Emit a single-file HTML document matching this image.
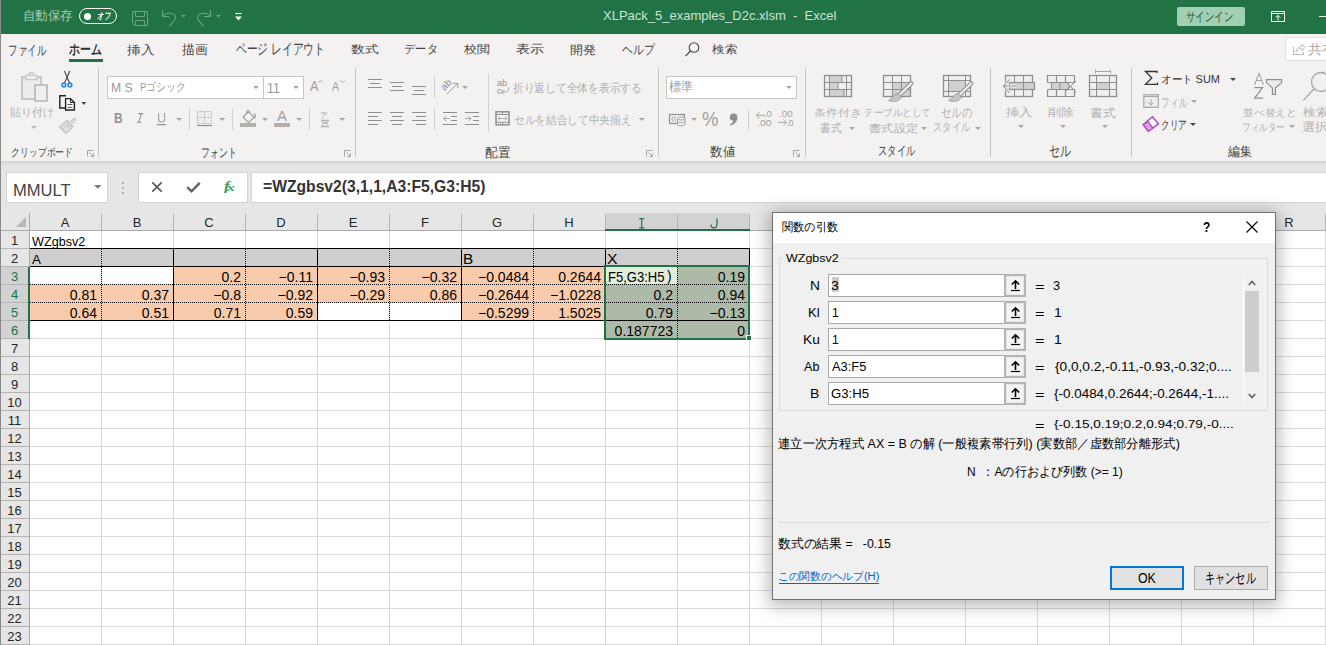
<!DOCTYPE html><html><head><meta charset="utf-8"><style>
*{box-sizing:border-box}
html,body{margin:0;padding:0}
body{width:1326px;height:645px;overflow:hidden;position:relative;background:#fff;font-family:"Liberation Sans",sans-serif;font-size:12px;color:#262626}
.a{position:absolute}
.tx{position:absolute;white-space:pre;transform-origin:0 0}
.ch{position:absolute;top:213px;height:17px;width:72px;text-align:center;font-size:13px;line-height:19px;color:#262626}
.rh{position:absolute;left:0;width:29px;height:18px;text-align:center;font-size:13px;line-height:19px;color:#262626}
.cell{position:absolute;height:17px;font-size:14px;line-height:20px;color:#000;white-space:nowrap;overflow:hidden;padding:0 4px 0 2px}
.r{text-align:right}
svg{position:absolute;overflow:visible}
</style></head><body>
<div class="a" style="left:0px;top:0px;width:1326px;height:34px;background:#217346;"></div>
<div class="a" style="left:79px;top:8px;width:38px;height:16px;border:1.5px solid #fff;border-radius:8px"></div>
<div class="a" style="left:84px;top:13px;width:7px;height:7px;border-radius:50%;background:#fff"></div>
<svg style="left:131px;top:10px;" width="18" height="17" viewBox="0 0 18 17"><path d="M1.5 1.5H16.5V15.5H3.5L1.5 13.5Z M4.5 1.5V6.5H13.5V1.5 M4.5 15.5V10.5H13.5V15.5" fill="none" stroke="#6aa583" stroke-width="1"/></svg>
<svg style="left:160px;top:9px;" width="30" height="18" viewBox="0 0 30 18"><path d="M2.5 1V7.5H9 M2.5 7.5 C6 3 15 3 15.5 8.5 C15.5 11 13 13.5 9.5 17" fill="none" stroke="#6aa583" stroke-width="1.1"/><path d="M21 6H26L23.5 8.5Z" fill="#6aa583"/></svg>
<svg style="left:196px;top:9px;" width="30" height="18" viewBox="0 0 30 18"><path d="M14.5 1V7.5H8 M14.5 7.5 C11 3 2 3 1.5 8.5 C1.5 11 4 13.5 7.5 17" fill="none" stroke="#6aa583" stroke-width="1.1"/><path d="M20 6H25L22.5 8.5Z" fill="#6aa583"/></svg>
<svg style="left:235px;top:13px;" width="7" height="8" viewBox="0 0 7 8"><path d="M0.5 0.5H6.5" stroke="#fff" stroke-width="1.2"/><path d="M0 3.5H7L3.5 7.5Z" fill="#fff"/></svg>
<div class="a" style="left:1177px;top:7px;width:68px;height:19px;background:#a0cfb4;border-radius:2px"></div>
<svg style="left:1271px;top:11px;" width="14" height="11" viewBox="0 0 14 11"><path d="M0.5 0.5H13.5V10.5H0.5Z M0.5 2.5H13.5 M7 9.5V4.5 M4.8 6.5L7 4.3L9.2 6.5" fill="none" stroke="#fff" stroke-width="1"/></svg>
<div class="a" style="left:1319px;top:16px;width:7px;height:1px;background:#e6efe9;"></div>
<div class="a" style="left:0px;top:34px;width:1326px;height:127px;background:#f3f2f1;"></div>
<div class="a" style="left:69px;top:59px;width:34px;height:3px;background:#217346;"></div>
<svg style="left:685px;top:42px;" width="15" height="15" viewBox="0 0 15 15"><circle cx="9" cy="5.5" r="4.8" fill="none" stroke="#444" stroke-width="1.1"/><path d="M5.6 9L0.5 14.2" stroke="#444" stroke-width="1.2"/></svg>
<div class="a" style="left:1285px;top:37px;width:60px;height:24px;background:#fff;border:1px solid #e1dfdd;border-radius:2px"></div>
<svg style="left:1293px;top:43px;" width="12" height="12" viewBox="0 0 12 12"><path d="M0.5 4V11.5H10.5V9" fill="none" stroke="#b8b8b8" stroke-width="1"/><path d="M3 9C3 5 6 3.5 9 3.5V1L11.8 4.5L9 8V5.5C6.5 5.5 4.5 6.5 3 9Z" fill="none" stroke="#b8b8b8" stroke-width="0.9"/></svg>
<div class="a" style="left:98px;top:68px;width:1px;height:89px;background:#c8c6c4;"></div>
<div class="a" style="left:355px;top:68px;width:1px;height:89px;background:#c8c6c4;"></div>
<div class="a" style="left:658px;top:68px;width:1px;height:89px;background:#c8c6c4;"></div>
<div class="a" style="left:805px;top:68px;width:1px;height:89px;background:#c8c6c4;"></div>
<div class="a" style="left:990px;top:68px;width:1px;height:89px;background:#c8c6c4;"></div>
<div class="a" style="left:1131px;top:68px;width:1px;height:89px;background:#c8c6c4;"></div>
<svg style="left:87px;top:150px;" width="7" height="7" viewBox="0 0 7 7"><path d="M0.5 6.5V0.5H6.5" fill="none" stroke="#a6a6a6" stroke-width="1"/><path d="M2.5 2.5L6.5 6.5 M6.5 3.5V6.5H3.5" fill="none" stroke="#a6a6a6" stroke-width="1"/></svg>
<svg style="left:344px;top:150px;" width="7" height="7" viewBox="0 0 7 7"><path d="M0.5 6.5V0.5H6.5" fill="none" stroke="#a6a6a6" stroke-width="1"/><path d="M2.5 2.5L6.5 6.5 M6.5 3.5V6.5H3.5" fill="none" stroke="#a6a6a6" stroke-width="1"/></svg>
<svg style="left:646px;top:150px;" width="7" height="7" viewBox="0 0 7 7"><path d="M0.5 6.5V0.5H6.5" fill="none" stroke="#a6a6a6" stroke-width="1"/><path d="M2.5 2.5L6.5 6.5 M6.5 3.5V6.5H3.5" fill="none" stroke="#a6a6a6" stroke-width="1"/></svg>
<svg style="left:793px;top:150px;" width="7" height="7" viewBox="0 0 7 7"><path d="M0.5 6.5V0.5H6.5" fill="none" stroke="#a6a6a6" stroke-width="1"/><path d="M2.5 2.5L6.5 6.5 M6.5 3.5V6.5H3.5" fill="none" stroke="#a6a6a6" stroke-width="1"/></svg>
<svg style="left:0;top:0" width="1326" height="645" viewBox="0 0 1326 645"><path d="M22 77H41V99H22Z" fill="#ececec" stroke="#c8c8c8" stroke-width="2"/><path d="M26 75.5H37V79.5H26Z" fill="#f3f3f3" stroke="#c8c8c8" stroke-width="1.5"/><path d="M29 75.5C29 71.5 34 71.5 34 75.5" fill="none" stroke="#c8c8c8" stroke-width="1.5"/><path d="M35 85H47V101H35Z" fill="#efefef" stroke="#b4b4b4" stroke-width="1.6"/></svg>
<svg style="left:31px;top:126px;" width="6" height="3" viewBox="0 0 6 3"><path d="M0 0H6L3 3Z" fill="#b8b8b8"/></svg>
<svg style="left:0;top:0" width="1326" height="645" viewBox="0 0 1326 645"><path d="M64.5 71L69.5 83 M69.8 71L64.5 83" stroke="#444" stroke-width="1.1" fill="none"/><circle cx="63.9" cy="85" r="1.9" fill="none" stroke="#2b88d8" stroke-width="1.6"/><circle cx="69.9" cy="85" r="1.9" fill="none" stroke="#2b88d8" stroke-width="1.6"/></svg>
<svg style="left:0;top:0" width="1326" height="645" viewBox="0 0 1326 645"><path d="M66 95.8H59.8V108H65" fill="none" stroke="#222" stroke-width="1.4"/><path d="M65.6 98.6H70.5L74.4 102.5V110H65.6Z" fill="#fff" stroke="#222" stroke-width="1.4"/><path d="M70.5 98.6V102.5H74.4" fill="none" stroke="#222" stroke-width="1"/><path d="M67.5 104.5H72.5 M67.5 107.3H72.5" stroke="#444" stroke-width="0.9"/></svg>
<svg style="left:0;top:0" width="1326" height="645" viewBox="0 0 1326 645"><path d="M81.4 102H86.2L83.8 105Z" fill="#444"/></svg>
<svg style="left:0;top:0" width="1326" height="645" viewBox="0 0 1326 645"><path d="M59.6 127L67 120.5L73 126.5L66 133.5Z" fill="#dedede" stroke="#c0c0c0" stroke-width="1.2"/><path d="M62 129.5L69.5 123" stroke="#c8c8c8"/><path d="M68.5 125L74.5 119.5" stroke="#c0c0c0" stroke-width="3.2" stroke-linecap="round"/><path d="M68.5 125L74.5 119.5" stroke="#e6e6e6" stroke-width="1.2" stroke-linecap="round"/></svg>
<div class="a" style="left:107px;top:76px;width:157px;height:23px;background:#fff;border:1px solid #c6c6c6"></div>
<div class="a" style="left:263px;top:76px;width:41px;height:23px;background:#fff;border:1px solid #c6c6c6"></div>
<svg style="left:253px;top:86px;" width="6" height="3" viewBox="0 0 6 3"><path d="M0 0H6L3 3Z" fill="#a6a6a6"/></svg>
<svg style="left:293px;top:86px;" width="6" height="3" viewBox="0 0 6 3"><path d="M0 0H6L3 3Z" fill="#a6a6a6"/></svg>
<svg style="left:0;top:0" width="1326" height="645" viewBox="0 0 1326 645"><path d="M318.3 82.8L320.5 80.3L322.7 82.8" fill="none" stroke="#b4b4b4" stroke-width="1"/></svg>
<svg style="left:0;top:0" width="1326" height="645" viewBox="0 0 1326 645"><path d="M340.2 80.2L342.5 82.7L344.8 80.2" fill="none" stroke="#b4b4b4" stroke-width="1"/></svg>
<svg style="left:0;top:0" width="1326" height="645" viewBox="0 0 1326 645"><path d="M138.5 113.6H143.2 M137 122.2H141.4 M141.3 113.6L138.9 122.2" fill="none" stroke="#909090" stroke-width="1.1"/></svg>
<svg style="left:0;top:0" width="1326" height="645" viewBox="0 0 1326 645"><path d="M158.6 113V119C158.6 123 164.6 123 164.6 119V113" fill="none" stroke="#a0a0a0" stroke-width="1.1"/><path d="M157 124.6H166" stroke="#909090" stroke-width="1.2"/></svg>
<svg style="left:176px;top:118px;" width="6" height="3" viewBox="0 0 6 3"><path d="M0 0H6L3 3Z" fill="#a6a6a6"/></svg>
<div class="a" style="left:189px;top:109px;width:1px;height:21px;background:#d2d0ce;"></div>
<svg style="left:0;top:0" width="1326" height="645" viewBox="0 0 1326 645"><rect x="197.5" y="111.5" width="14" height="12" fill="#ededed" stroke="#b8b8b8" stroke-dasharray="1.5 1"/><path d="M204.5 112V123 M198 117.5H211" stroke="#b8b8b8" stroke-dasharray="1.5 1"/><path d="M197 125.5H212" stroke="#8f8f8f" stroke-width="1.2"/></svg>
<svg style="left:219px;top:118px;" width="6" height="3" viewBox="0 0 6 3"><path d="M0 0H6L3 3Z" fill="#a6a6a6"/></svg>
<div class="a" style="left:232px;top:109px;width:1px;height:21px;background:#d2d0ce;"></div>
<svg style="left:0;top:0" width="1326" height="645" viewBox="0 0 1326 645"><path d="M243 117L248.5 111.7L254 117.3L248.5 122.6Z" fill="#f2f2f2" stroke="#a0a0a0" stroke-width="1.2"/><path d="M246.5 114C246 111 248 110 249.5 111.3" fill="none" stroke="#a0a0a0" stroke-width="1.1"/><path d="M254 113.5C255.5 115 255.5 117 254.5 118.5" fill="none" stroke="#a0a0a0" stroke-width="1.3"/></svg>
<div class="a" style="left:240px;top:123px;width:16px;height:4px;background:#b4b0ac;"></div>
<svg style="left:262px;top:118px;" width="6" height="3" viewBox="0 0 6 3"><path d="M0 0H6L3 3Z" fill="#a6a6a6"/></svg>
<div class="a" style="left:274px;top:123px;width:16px;height:4px;background:#b4b0ac;"></div>
<svg style="left:296px;top:118px;" width="6" height="3" viewBox="0 0 6 3"><path d="M0 0H6L3 3Z" fill="#a6a6a6"/></svg>
<div class="a" style="left:309px;top:109px;width:1px;height:21px;background:#d2d0ce;"></div>
<svg style="left:0;top:0" width="1326" height="645" viewBox="0 0 1326 645"><path d="M321 120.5H329 M322 123H328 M321 126.5H329" stroke="#b0b0b0" stroke-width="1.3"/><path d="M322.5 120.5V126.5 M327.5 120.5V126.5" stroke="#c8c8c8"/></svg>
<svg style="left:339px;top:118px;" width="6" height="3" viewBox="0 0 6 3"><path d="M0 0H6L3 3Z" fill="#a6a6a6"/></svg>
<div class="a" style="left:368px;top:79px;width:14px;height:1px;background:#8f8f8f;"></div>
<div class="a" style="left:370px;top:83px;width:10px;height:1px;background:#8f8f8f;"></div>
<div class="a" style="left:368px;top:87px;width:14px;height:1px;background:#8f8f8f;"></div>
<div class="a" style="left:390px;top:82px;width:14px;height:1px;background:#8f8f8f;"></div>
<div class="a" style="left:392px;top:86px;width:10px;height:1px;background:#8f8f8f;"></div>
<div class="a" style="left:390px;top:90px;width:14px;height:1px;background:#8f8f8f;"></div>
<div class="a" style="left:412px;top:86px;width:14px;height:1px;background:#8f8f8f;"></div>
<div class="a" style="left:414px;top:90px;width:10px;height:1px;background:#8f8f8f;"></div>
<div class="a" style="left:412px;top:94px;width:14px;height:1px;background:#8f8f8f;"></div>
<div class="a" style="left:434px;top:77px;width:1px;height:21px;background:#d2d0ce;"></div>
<svg style="left:0;top:0" width="1326" height="645" viewBox="0 0 1326 645"><text x="0" y="0" font-size="10" fill="#909090" font-family="Liberation Sans" transform="translate(444.5 91) rotate(-45)">ab</text><path d="M447 94L457.5 83.5 M453 83.3H457.7V88" fill="none" stroke="#a0a0a0" stroke-width="1"/></svg>
<svg style="left:462px;top:86px;" width="6" height="3" viewBox="0 0 6 3"><path d="M0 0H6L3 3Z" fill="#a6a6a6"/></svg>
<div class="a" style="left:488px;top:74px;width:1px;height:58px;background:#d2d0ce;"></div>
<svg style="left:0;top:0" width="1326" height="645" viewBox="0 0 1326 645"><text x="497" y="86" font-size="9" fill="#909090" font-family="Liberation Sans">ab</text><text x="497" y="94" font-size="9" fill="#909090" font-family="Liberation Sans">c</text><path d="M508.3 87.3C509.5 90 507.5 92 504 92H501.5 M504 89.5L501.5 92L504 94.5" fill="none" stroke="#a0a0a0" stroke-width="1"/></svg>
<div class="a" style="left:368px;top:112px;width:14px;height:1px;background:#8f8f8f;"></div>
<div class="a" style="left:368px;top:116px;width:10px;height:1px;background:#8f8f8f;"></div>
<div class="a" style="left:368px;top:120px;width:14px;height:1px;background:#8f8f8f;"></div>
<div class="a" style="left:368px;top:124px;width:10px;height:1px;background:#8f8f8f;"></div>
<div class="a" style="left:390px;top:112px;width:14px;height:1px;background:#8f8f8f;"></div>
<div class="a" style="left:392px;top:116px;width:10px;height:1px;background:#8f8f8f;"></div>
<div class="a" style="left:390px;top:120px;width:14px;height:1px;background:#8f8f8f;"></div>
<div class="a" style="left:392px;top:124px;width:10px;height:1px;background:#8f8f8f;"></div>
<div class="a" style="left:412px;top:112px;width:14px;height:1px;background:#8f8f8f;"></div>
<div class="a" style="left:416px;top:116px;width:10px;height:1px;background:#8f8f8f;"></div>
<div class="a" style="left:412px;top:120px;width:14px;height:1px;background:#8f8f8f;"></div>
<div class="a" style="left:416px;top:124px;width:10px;height:1px;background:#8f8f8f;"></div>
<div class="a" style="left:434px;top:109px;width:1px;height:21px;background:#d2d0ce;"></div>
<div class="a" style="left:443px;top:112px;width:14px;height:1px;background:#8f8f8f;"></div>
<div class="a" style="left:451px;top:116px;width:6px;height:1px;background:#8f8f8f;"></div>
<div class="a" style="left:451px;top:120px;width:6px;height:1px;background:#8f8f8f;"></div>
<div class="a" style="left:443px;top:124px;width:14px;height:1px;background:#8f8f8f;"></div>
<svg style="left:0;top:0" width="1326" height="645" viewBox="0 0 1326 645"><path d="M449.5 118.5H443.5 M446 116L443.5 118.5L446 121" fill="none" stroke="#a6a6a6" stroke-width="1"/></svg>
<div class="a" style="left:465px;top:112px;width:14px;height:1px;background:#8f8f8f;"></div>
<div class="a" style="left:473px;top:116px;width:6px;height:1px;background:#8f8f8f;"></div>
<div class="a" style="left:473px;top:120px;width:6px;height:1px;background:#8f8f8f;"></div>
<div class="a" style="left:465px;top:124px;width:14px;height:1px;background:#8f8f8f;"></div>
<svg style="left:0;top:0" width="1326" height="645" viewBox="0 0 1326 645"><path d="M465 118.5H471 M468.5 116L471 118.5L468.5 121" fill="none" stroke="#a6a6a6" stroke-width="1"/></svg>
<svg style="left:0;top:0" width="1326" height="645" viewBox="0 0 1326 645"><rect x="496" y="111.8" width="13" height="13" fill="none" stroke="#8f8f8f" stroke-width="1.5"/><path d="M496 114.5H509 M496 122.3H509 M502.5 112V114.5 M502.5 122.3V124.8" stroke="#8f8f8f" stroke-width="1"/><path d="M498 118.5H507 M500 116.8L498 118.5L500 120.2 M505 116.8L507 118.5L505 120.2" fill="none" stroke="#a6a6a6" stroke-width="0.9"/></svg>
<svg style="left:639px;top:118px;" width="6" height="3" viewBox="0 0 6 3"><path d="M0 0H6L3 3Z" fill="#a6a6a6"/></svg>
<div class="a" style="left:666px;top:76px;width:131px;height:23px;background:#fff;border:1px solid #c6c6c6"></div>
<svg style="left:786px;top:86px;" width="6" height="3" viewBox="0 0 6 3"><path d="M0 0H6L3 3Z" fill="#a6a6a6"/></svg>
<svg style="left:0;top:0" width="1326" height="645" viewBox="0 0 1326 645"><rect x="669.5" y="114.5" width="15" height="9" fill="none" stroke="#8f8f8f" stroke-width="1.2"/><path d="M673.5 116.5C671.5 116.5 671.5 121.5 673.5 121.5 M675.5 116.5C674.5 117 674.5 121 675.5 121.5" fill="none" stroke="#8f8f8f" stroke-width="0.9"/><path d="M677.5 118.5V124.5C677.5 126.3 685 126.3 685 124.5V118.5" fill="#ededed" stroke="#a6a6a6" stroke-width="1"/><ellipse cx="681.25" cy="118.5" rx="3.75" ry="1.5" fill="#ededed" stroke="#a6a6a6" stroke-width="1"/><path d="M677.5 121.5C677.5 123 685 123 685 121.5" fill="none" stroke="#a6a6a6" stroke-width="0.8"/></svg>
<svg style="left:691px;top:118px;" width="6" height="3" viewBox="0 0 6 3"><path d="M0 0H6L3 3Z" fill="#a6a6a6"/></svg>
<svg style="left:0;top:0" width="1326" height="645" viewBox="0 0 1326 645"><path d="M733.5 113.5C737 113.5 738 116 737.3 119C736.5 122.5 733.5 125 730 125.5L729.8 124.5C731.8 123.5 733.2 122 733.2 120.5C731 120.5 729.8 119.3 729.8 117.2C729.8 115 731.3 113.5 733.5 113.5Z" fill="#8f8f8f"/></svg>
<div class="a" style="left:748px;top:109px;width:1px;height:21px;background:#d2d0ce;"></div>
<svg style="left:0;top:0" width="1326" height="645" viewBox="0 0 1326 645"><path d="M765 115.3H756.5 M759.5 112.3L756.5 115.3L759.5 118.3" fill="none" stroke="#a6a6a6" stroke-width="1"/></svg>
<svg style="left:0;top:0" width="1326" height="645" viewBox="0 0 1326 645"><path d="M778 122.4H786.5 M783.5 119.4L786.5 122.4L783.5 125.4" fill="none" stroke="#a6a6a6" stroke-width="1"/></svg>
<svg style="left:0;top:0" width="1326" height="645" viewBox="0 0 1326 645"><rect x="824.5" y="75.5" width="27.0" height="21.0" fill="#efefef"/><rect x="830" y="76" width="12" height="6" fill="#d0d0d0"/><rect x="830" y="83" width="8" height="6" fill="#d0d0d0"/><rect x="830" y="90" width="14" height="6" fill="#d0d0d0"/><path d="M829.5 75.5V96.5" stroke="#8f8f8f" stroke-width="1"/><path d="M846.5 75.5V96.5" stroke="#8f8f8f" stroke-width="1"/><path d="M824.5 82.5H851.5" stroke="#8f8f8f" stroke-width="1"/><path d="M824.5 89.5H851.5" stroke="#8f8f8f" stroke-width="1"/><rect x="824.5" y="75.5" width="27.0" height="21.0" fill="none" stroke="#8f8f8f" stroke-width="1.3"/><path d="M842 76V82 M838 83V89 M844 90V96" stroke="#8f8f8f"/></svg>
<svg style="left:0;top:0" width="1326" height="645" viewBox="0 0 1326 645"><rect x="883.5" y="75.5" width="27.0" height="21.0" fill="#efefef"/><rect x="893" y="83" width="17" height="13" fill="#d0d0d0"/><path d="M892.5 75.5V96.5" stroke="#8f8f8f" stroke-width="1"/><path d="M901.5 75.5V96.5" stroke="#8f8f8f" stroke-width="1"/><path d="M883.5 82.5H910.5" stroke="#8f8f8f" stroke-width="1"/><path d="M883.5 89.5H910.5" stroke="#8f8f8f" stroke-width="1"/><rect x="883.5" y="75.5" width="27.0" height="21.0" fill="none" stroke="#8f8f8f" stroke-width="1.3"/><path d="M911.3 83.3L899.5 95" stroke="#8f8f8f" stroke-width="4.4" stroke-linecap="round"/><path d="M911.3 83.3L899.5 95" stroke="#f0f0f0" stroke-width="2.2" stroke-linecap="round"/><path d="M897.5 93.5C893.5 94 893 98.5 888.5 100.5C894 102.5 900 101 901.5 97Z" fill="#c4c4c4" stroke="#9a9a9a" stroke-width="0.9"/></svg>
<svg style="left:0;top:0" width="1326" height="645" viewBox="0 0 1326 645"><rect x="943.5" y="75.5" width="27.0" height="21.0" fill="#efefef"/><rect x="949" y="81" width="16" height="10" fill="#d0d0d0"/><path d="M948.5 75.5V96.5" stroke="#8f8f8f" stroke-width="1"/><path d="M965.5 75.5V96.5" stroke="#8f8f8f" stroke-width="1"/><path d="M943.5 80.5H970.5" stroke="#8f8f8f" stroke-width="1"/><path d="M943.5 91.5H970.5" stroke="#8f8f8f" stroke-width="1"/><rect x="943.5" y="75.5" width="27.0" height="21.0" fill="none" stroke="#8f8f8f" stroke-width="1.3"/><path d="M971.3 83.3L959.5 95" stroke="#8f8f8f" stroke-width="4.4" stroke-linecap="round"/><path d="M971.3 83.3L959.5 95" stroke="#f0f0f0" stroke-width="2.2" stroke-linecap="round"/><path d="M957.5 93.5C953.5 94 953 98.5 948.5 100.5C954 102.5 960 101 961.5 97Z" fill="#c4c4c4" stroke="#9a9a9a" stroke-width="0.9"/></svg>
<svg style="left:849px;top:127px;" width="6" height="3" viewBox="0 0 6 3"><path d="M0 0H6L3 3Z" fill="#a6a6a6"/></svg>
<svg style="left:921px;top:127px;" width="6" height="3" viewBox="0 0 6 3"><path d="M0 0H6L3 3Z" fill="#a6a6a6"/></svg>
<svg style="left:975px;top:127px;" width="6" height="3" viewBox="0 0 6 3"><path d="M0 0H6L3 3Z" fill="#a6a6a6"/></svg>
<svg style="left:0;top:0" width="1326" height="645" viewBox="0 0 1326 645"><rect x="1005.5" y="75.5" width="27.0" height="21.0" fill="#efefef"/><path d="M1014.5 75.5V96.5" stroke="#8f8f8f" stroke-width="1"/><path d="M1023.5 75.5V96.5" stroke="#8f8f8f" stroke-width="1"/><path d="M1005.5 82.5H1032.5" stroke="#8f8f8f" stroke-width="1"/><path d="M1005.5 89.5H1032.5" stroke="#8f8f8f" stroke-width="1"/><rect x="1005.5" y="75.5" width="27.0" height="21.0" fill="none" stroke="#8f8f8f" stroke-width="1.3"/><rect x="1009.5" y="82.5" width="25" height="7" fill="#d0d0d0" stroke="#8f8f8f" stroke-width="1.2"/><path d="M1023.5 82.5V89.5" stroke="#8f8f8f"/><path d="M1016 86H1004 M1009.5 79.5L1003.5 86L1009.5 92.5" fill="none" stroke="#f3f3f3" stroke-width="3"/><path d="M1016 86H1004 M1009.5 79.5L1003.5 86L1009.5 92.5" fill="none" stroke="#8f8f8f" stroke-width="1.1"/></svg>
<svg style="left:1018px;top:125px;" width="6" height="3" viewBox="0 0 6 3"><path d="M0 0H6L3 3Z" fill="#a6a6a6"/></svg>
<svg style="left:0;top:0" width="1326" height="645" viewBox="0 0 1326 645"><rect x="1047.5" y="75.5" width="27" height="21" fill="#efefef"/><path d="M1047.5 82.5V75.5H1074.5V82.5H1047.5 M1047.5 89.5V96.5H1074.5V89.5H1047.5 M1056.5 75.5V82.5 M1065.5 75.5V82.5 M1056.5 89.5V96.5 M1065.5 89.5V96.5" fill="none" stroke="#8f8f8f" stroke-width="1.2"/><path d="M1051.5 82.5H1067L1070 86L1067 89.5H1051.5Z" fill="#d0d0d0" stroke="#8f8f8f" stroke-width="1.1"/><path d="M1060 82.5V89.5" stroke="#8f8f8f"/><path d="M1065 81L1076 92 M1076 81L1065 92" stroke="#8f8f8f" stroke-width="1"/></svg>
<svg style="left:1060px;top:125px;" width="6" height="3" viewBox="0 0 6 3"><path d="M0 0H6L3 3Z" fill="#a6a6a6"/></svg>
<svg style="left:0;top:0" width="1326" height="645" viewBox="0 0 1326 645"><rect x="1089.5" y="75.5" width="27.0" height="21.0" fill="#efefef"/><rect x="1097" y="83" width="12" height="6" fill="#d0d0d0"/><path d="M1096.5 75.5V96.5" stroke="#8f8f8f" stroke-width="1"/><path d="M1109.5 75.5V96.5" stroke="#8f8f8f" stroke-width="1"/><path d="M1089.5 82.5H1116.5" stroke="#8f8f8f" stroke-width="1"/><path d="M1089.5 89.5H1116.5" stroke="#8f8f8f" stroke-width="1"/><rect x="1089.5" y="75.5" width="27.0" height="21.0" fill="none" stroke="#8f8f8f" stroke-width="1.3"/><path d="M1095.5 71.5H1110.5 M1095.5 69.5V73.5 M1110.5 69.5V73.5" stroke="#a6a6a6" stroke-width="1"/></svg>
<svg style="left:1102px;top:125px;" width="6" height="3" viewBox="0 0 6 3"><path d="M0 0H6L3 3Z" fill="#a6a6a6"/></svg>
<svg style="left:0;top:0" width="1326" height="645" viewBox="0 0 1326 645"><path d="M1157 73V71.5H1145.5L1151.8 78L1145.5 84.3H1157.5V82.5" fill="none" stroke="#333" stroke-width="1.3"/></svg>
<svg style="left:1230px;top:77.5px;" width="6" height="3" viewBox="0 0 6 3"><path d="M0 0H6L3 3Z" fill="#444"/></svg>
<svg style="left:0;top:0" width="1326" height="645" viewBox="0 0 1326 645"><rect x="1143.8" y="94.8" width="14.5" height="12.5" fill="#ededed" stroke="#a6a6a6" stroke-width="1.2"/><path d="M1144 96.5H1158" stroke="#a6a6a6"/><path d="M1151 99.5V105 M1148.5 102.5L1151 105L1153.5 102.5" fill="none" stroke="#a6a6a6" stroke-width="1"/></svg>
<svg style="left:1191px;top:100px;" width="6" height="3" viewBox="0 0 6 3"><path d="M0 0H6L3 3Z" fill="#a6a6a6"/></svg>
<svg style="left:0;top:0" width="1326" height="645" viewBox="0 0 1326 645"><path d="M1152.5 116.8L1158.4 123.8L1148.2 131.2L1143.4 124.6Z" fill="#fff" stroke="#b146c2" stroke-width="1.5"/><path d="M1143.4 124.6L1148 121.4L1153 128.4L1148.2 131.2Z" fill="#d7a0e0" stroke="#b146c2" stroke-width="1.2"/></svg>
<svg style="left:1190px;top:122.5px;" width="6" height="3" viewBox="0 0 6 3"><path d="M0 0H6L3 3Z" fill="#444"/></svg>
<svg style="left:0;top:0" width="1326" height="645" viewBox="0 0 1326 645"><path d="M1254.5 84.8L1259 73.3L1263.5 84.8 M1256.3 80.5H1261.7" fill="none" stroke="#a6a6a6" stroke-width="1.1"/><path d="M1254.3 87.6H1262.6L1254.6 98.2H1263" fill="none" stroke="#8f8f8f" stroke-width="1.2"/></svg>
<svg style="left:0;top:0" width="1326" height="645" viewBox="0 0 1326 645"><path d="M1266.5 79.6H1281.6V82.6L1275.4 87.9V94.4H1272.4V87.9L1266.5 82.6Z" fill="#ededed" stroke="#8f8f8f" stroke-width="1.2"/></svg>
<svg style="left:1289px;top:125px;" width="6" height="3" viewBox="0 0 6 3"><path d="M0 0H6L3 3Z" fill="#a6a6a6"/></svg>
<svg style="left:0;top:0" width="1326" height="645" viewBox="0 0 1326 645"><circle cx="1321" cy="82" r="9.5" fill="#f0f0f0" stroke="#a6a6a6" stroke-width="1.3"/><path d="M1314 89L1303.3 100.4" stroke="#a6a6a6" stroke-width="1.3"/></svg>
<div class="a" style="left:0px;top:161px;width:1326px;height:52px;background:#e6e6e6;"></div>
<div class="a" style="left:0px;top:161px;width:1326px;height:5px;background:linear-gradient(#d0d0d0,#e6e6e6);"></div>
<div class="a" style="left:6px;top:172px;width:102px;height:31px;background:#fff;border:1px solid #d4d4d4"></div>
<svg style="left:94px;top:185px;" width="8" height="4" viewBox="0 0 8 4"><path d="M0 0H7.5L3.75 3.8Z" fill="#777"/></svg>
<div class="a" style="left:122px;top:182px;width:2px;height:2px;background:#b0b0b0;"></div>
<div class="a" style="left:122px;top:187px;width:2px;height:2px;background:#b0b0b0;"></div>
<div class="a" style="left:122px;top:192px;width:2px;height:2px;background:#b0b0b0;"></div>
<div class="a" style="left:138px;top:172px;width:110px;height:31px;background:#fff;border:1px solid #d4d4d4"></div>
<svg style="left:151px;top:181px;" width="12" height="12" viewBox="0 0 12 12"><path d="M1.3 1.3L10.7 10.7 M10.7 1.3L1.3 10.7" stroke="#5a5a5a" stroke-width="1.7"/></svg>
<svg style="left:186px;top:181px;" width="15" height="12" viewBox="0 0 15 12"><path d="M1.2 6.2L5.5 10.3L13.8 1.8" fill="none" stroke="#626262" stroke-width="2.4"/></svg>
<div class="a" style="left:251px;top:172px;width:1080px;height:31px;background:#fff;border:1px solid #d4d4d4"></div>
<div class="a" style="left:0px;top:213px;width:1326px;height:18px;background:#e6e6e6;"></div>
<div class="a" style="left:0px;top:231px;width:29px;height:414px;background:#e6e6e6;"></div>
<div class="a" style="left:606px;top:213px;width:143px;height:17px;background:#d2d2d2;"></div>
<div class="a" style="left:0px;top:267px;width:29px;height:72px;background:#d2d2d2;"></div>
<div class="a" style="left:30px;top:230px;width:1296px;height:1px;background:#dadada;"></div>
<div class="a" style="left:30px;top:248px;width:1296px;height:1px;background:#dadada;"></div>
<div class="a" style="left:0px;top:248px;width:29px;height:1px;background:#b4b4b4;"></div>
<div class="a" style="left:30px;top:266px;width:1296px;height:1px;background:#dadada;"></div>
<div class="a" style="left:0px;top:266px;width:29px;height:1px;background:#b4b4b4;"></div>
<div class="a" style="left:30px;top:284px;width:1296px;height:1px;background:#dadada;"></div>
<div class="a" style="left:0px;top:284px;width:29px;height:1px;background:#b4b4b4;"></div>
<div class="a" style="left:30px;top:302px;width:1296px;height:1px;background:#dadada;"></div>
<div class="a" style="left:0px;top:302px;width:29px;height:1px;background:#b4b4b4;"></div>
<div class="a" style="left:30px;top:320px;width:1296px;height:1px;background:#dadada;"></div>
<div class="a" style="left:0px;top:320px;width:29px;height:1px;background:#b4b4b4;"></div>
<div class="a" style="left:30px;top:338px;width:1296px;height:1px;background:#dadada;"></div>
<div class="a" style="left:0px;top:338px;width:29px;height:1px;background:#b4b4b4;"></div>
<div class="a" style="left:30px;top:356px;width:1296px;height:1px;background:#dadada;"></div>
<div class="a" style="left:0px;top:356px;width:29px;height:1px;background:#b4b4b4;"></div>
<div class="a" style="left:30px;top:374px;width:1296px;height:1px;background:#dadada;"></div>
<div class="a" style="left:0px;top:374px;width:29px;height:1px;background:#b4b4b4;"></div>
<div class="a" style="left:30px;top:392px;width:1296px;height:1px;background:#dadada;"></div>
<div class="a" style="left:0px;top:392px;width:29px;height:1px;background:#b4b4b4;"></div>
<div class="a" style="left:30px;top:410px;width:1296px;height:1px;background:#dadada;"></div>
<div class="a" style="left:0px;top:410px;width:29px;height:1px;background:#b4b4b4;"></div>
<div class="a" style="left:30px;top:428px;width:1296px;height:1px;background:#dadada;"></div>
<div class="a" style="left:0px;top:428px;width:29px;height:1px;background:#b4b4b4;"></div>
<div class="a" style="left:30px;top:446px;width:1296px;height:1px;background:#dadada;"></div>
<div class="a" style="left:0px;top:446px;width:29px;height:1px;background:#b4b4b4;"></div>
<div class="a" style="left:30px;top:464px;width:1296px;height:1px;background:#dadada;"></div>
<div class="a" style="left:0px;top:464px;width:29px;height:1px;background:#b4b4b4;"></div>
<div class="a" style="left:30px;top:482px;width:1296px;height:1px;background:#dadada;"></div>
<div class="a" style="left:0px;top:482px;width:29px;height:1px;background:#b4b4b4;"></div>
<div class="a" style="left:30px;top:500px;width:1296px;height:1px;background:#dadada;"></div>
<div class="a" style="left:0px;top:500px;width:29px;height:1px;background:#b4b4b4;"></div>
<div class="a" style="left:30px;top:518px;width:1296px;height:1px;background:#dadada;"></div>
<div class="a" style="left:0px;top:518px;width:29px;height:1px;background:#b4b4b4;"></div>
<div class="a" style="left:30px;top:536px;width:1296px;height:1px;background:#dadada;"></div>
<div class="a" style="left:0px;top:536px;width:29px;height:1px;background:#b4b4b4;"></div>
<div class="a" style="left:30px;top:554px;width:1296px;height:1px;background:#dadada;"></div>
<div class="a" style="left:0px;top:554px;width:29px;height:1px;background:#b4b4b4;"></div>
<div class="a" style="left:30px;top:572px;width:1296px;height:1px;background:#dadada;"></div>
<div class="a" style="left:0px;top:572px;width:29px;height:1px;background:#b4b4b4;"></div>
<div class="a" style="left:30px;top:590px;width:1296px;height:1px;background:#dadada;"></div>
<div class="a" style="left:0px;top:590px;width:29px;height:1px;background:#b4b4b4;"></div>
<div class="a" style="left:30px;top:608px;width:1296px;height:1px;background:#dadada;"></div>
<div class="a" style="left:0px;top:608px;width:29px;height:1px;background:#b4b4b4;"></div>
<div class="a" style="left:30px;top:626px;width:1296px;height:1px;background:#dadada;"></div>
<div class="a" style="left:0px;top:626px;width:29px;height:1px;background:#b4b4b4;"></div>
<div class="a" style="left:30px;top:644px;width:1296px;height:1px;background:#dadada;"></div>
<div class="a" style="left:0px;top:644px;width:29px;height:1px;background:#b4b4b4;"></div>
<div class="a" style="left:30px;top:662px;width:1296px;height:1px;background:#dadada;"></div>
<div class="a" style="left:0px;top:662px;width:29px;height:1px;background:#b4b4b4;"></div>
<div class="a" style="left:0px;top:230px;width:1326px;height:1px;background:#ababab;"></div>
<div class="a" style="left:29px;top:231px;width:1px;height:414px;background:#dadada;"></div>
<div class="a" style="left:29px;top:214px;width:1px;height:16px;background:#b4b4b4;"></div>
<div class="a" style="left:101px;top:231px;width:1px;height:414px;background:#dadada;"></div>
<div class="a" style="left:101px;top:214px;width:1px;height:16px;background:#b4b4b4;"></div>
<div class="a" style="left:173px;top:231px;width:1px;height:414px;background:#dadada;"></div>
<div class="a" style="left:173px;top:214px;width:1px;height:16px;background:#b4b4b4;"></div>
<div class="a" style="left:245px;top:231px;width:1px;height:414px;background:#dadada;"></div>
<div class="a" style="left:245px;top:214px;width:1px;height:16px;background:#b4b4b4;"></div>
<div class="a" style="left:317px;top:231px;width:1px;height:414px;background:#dadada;"></div>
<div class="a" style="left:317px;top:214px;width:1px;height:16px;background:#b4b4b4;"></div>
<div class="a" style="left:389px;top:231px;width:1px;height:414px;background:#dadada;"></div>
<div class="a" style="left:389px;top:214px;width:1px;height:16px;background:#b4b4b4;"></div>
<div class="a" style="left:461px;top:231px;width:1px;height:414px;background:#dadada;"></div>
<div class="a" style="left:461px;top:214px;width:1px;height:16px;background:#b4b4b4;"></div>
<div class="a" style="left:533px;top:231px;width:1px;height:414px;background:#dadada;"></div>
<div class="a" style="left:533px;top:214px;width:1px;height:16px;background:#b4b4b4;"></div>
<div class="a" style="left:605px;top:231px;width:1px;height:414px;background:#dadada;"></div>
<div class="a" style="left:605px;top:214px;width:1px;height:16px;background:#b4b4b4;"></div>
<div class="a" style="left:677px;top:231px;width:1px;height:414px;background:#dadada;"></div>
<div class="a" style="left:677px;top:214px;width:1px;height:16px;background:#b4b4b4;"></div>
<div class="a" style="left:749px;top:231px;width:1px;height:414px;background:#dadada;"></div>
<div class="a" style="left:749px;top:214px;width:1px;height:16px;background:#b4b4b4;"></div>
<div class="a" style="left:821px;top:231px;width:1px;height:414px;background:#dadada;"></div>
<div class="a" style="left:821px;top:214px;width:1px;height:16px;background:#b4b4b4;"></div>
<div class="a" style="left:893px;top:231px;width:1px;height:414px;background:#dadada;"></div>
<div class="a" style="left:893px;top:214px;width:1px;height:16px;background:#b4b4b4;"></div>
<div class="a" style="left:965px;top:231px;width:1px;height:414px;background:#dadada;"></div>
<div class="a" style="left:965px;top:214px;width:1px;height:16px;background:#b4b4b4;"></div>
<div class="a" style="left:1037px;top:231px;width:1px;height:414px;background:#dadada;"></div>
<div class="a" style="left:1037px;top:214px;width:1px;height:16px;background:#b4b4b4;"></div>
<div class="a" style="left:1109px;top:231px;width:1px;height:414px;background:#dadada;"></div>
<div class="a" style="left:1109px;top:214px;width:1px;height:16px;background:#b4b4b4;"></div>
<div class="a" style="left:1181px;top:231px;width:1px;height:414px;background:#dadada;"></div>
<div class="a" style="left:1181px;top:214px;width:1px;height:16px;background:#b4b4b4;"></div>
<div class="a" style="left:1253px;top:231px;width:1px;height:414px;background:#dadada;"></div>
<div class="a" style="left:1253px;top:214px;width:1px;height:16px;background:#b4b4b4;"></div>
<div class="a" style="left:1325px;top:231px;width:1px;height:414px;background:#dadada;"></div>
<div class="a" style="left:1325px;top:214px;width:1px;height:16px;background:#b4b4b4;"></div>
<div class="a" style="left:29px;top:213px;width:1px;height:432px;background:#ababab;"></div>
<svg style="left:16px;top:217px;" width="10" height="10" viewBox="0 0 10 10"><path d="M10 0 L10 10 L0 10 Z" fill="#b8b8b8"/></svg>
<div class="ch" style="left:29px;color:#262626">A</div>
<div class="ch" style="left:101px;color:#262626">B</div>
<div class="ch" style="left:173px;color:#262626">C</div>
<div class="ch" style="left:245px;color:#262626">D</div>
<div class="ch" style="left:317px;color:#262626">E</div>
<div class="ch" style="left:389px;color:#262626">F</div>
<div class="ch" style="left:461px;color:#262626">G</div>
<div class="ch" style="left:533px;color:#262626">H</div>
<div class="ch" style="left:749px;color:#262626">K</div>
<div class="ch" style="left:821px;color:#262626">L</div>
<div class="ch" style="left:893px;color:#262626">M</div>
<div class="ch" style="left:965px;color:#262626">N</div>
<div class="ch" style="left:1037px;color:#262626">O</div>
<div class="ch" style="left:1109px;color:#262626">P</div>
<div class="ch" style="left:1181px;color:#262626">Q</div>
<div class="ch" style="left:1253px;color:#262626">R</div>
<div class="a" style="left:605px;top:229px;width:145px;height:2px;background:#217346;"></div>
<svg style="left:0px;top:0px;" width="1326" height="645" viewBox="0 0 1326 645"><path d="M639.2 218.6H644.2 M639.2 227.8H644.2 M641.7 218.6V227.8" fill="none" stroke="#217346" stroke-width="1.2"/><path d="M717 218.3V224.5C717 229 711 229 711 224.5" fill="none" stroke="#217346" stroke-width="1.2"/></svg>
<div class="rh" style="top:231px;color:#262626">1</div>
<div class="rh" style="top:249px;color:#262626">2</div>
<div class="rh" style="top:267px;color:#217346">3</div>
<div class="rh" style="top:285px;color:#217346">4</div>
<div class="rh" style="top:303px;color:#217346">5</div>
<div class="rh" style="top:321px;color:#217346">6</div>
<div class="rh" style="top:339px;color:#262626">7</div>
<div class="rh" style="top:357px;color:#262626">8</div>
<div class="rh" style="top:375px;color:#262626">9</div>
<div class="rh" style="top:393px;color:#262626">10</div>
<div class="rh" style="top:411px;color:#262626">11</div>
<div class="rh" style="top:429px;color:#262626">12</div>
<div class="rh" style="top:447px;color:#262626">13</div>
<div class="rh" style="top:465px;color:#262626">14</div>
<div class="rh" style="top:483px;color:#262626">15</div>
<div class="rh" style="top:501px;color:#262626">16</div>
<div class="rh" style="top:519px;color:#262626">17</div>
<div class="rh" style="top:537px;color:#262626">18</div>
<div class="rh" style="top:555px;color:#262626">19</div>
<div class="rh" style="top:573px;color:#262626">20</div>
<div class="rh" style="top:591px;color:#262626">21</div>
<div class="rh" style="top:609px;color:#262626">22</div>
<div class="rh" style="top:627px;color:#262626">23</div>
<div class="a" style="left:30px;top:249px;width:719px;height:17px;background:#d0cece;"></div>
<div class="a" style="left:174px;top:267px;width:287px;height:17px;background:#f8cbad;"></div>
<div class="a" style="left:30px;top:285px;width:431px;height:17px;background:#f8cbad;"></div>
<div class="a" style="left:30px;top:303px;width:287px;height:17px;background:#f8cbad;"></div>
<div class="a" style="left:462px;top:267px;width:143px;height:53px;background:#f8cbad;"></div>
<div class="a" style="left:606px;top:267px;width:143px;height:71px;background:#aebaa9;"></div>
<div class="a" style="left:606px;top:267px;width:71px;height:17px;background:#e3eddc;"></div>
<div class="a" style="left:30px;top:248px;width:720px;height:1px;background:#000;"></div>
<div class="a" style="left:30px;top:266px;width:720px;height:1px;background:#000;"></div>
<div class="a" style="left:30px;top:284px;width:720px;height:1px;background:repeating-linear-gradient(90deg,#000 0 1px,transparent 1px 2px);"></div>
<div class="a" style="left:30px;top:302px;width:720px;height:1px;background:repeating-linear-gradient(90deg,#000 0 1px,transparent 1px 2px);"></div>
<div class="a" style="left:30px;top:320px;width:720px;height:1px;background:#000;"></div>
<div class="a" style="left:173px;top:249px;width:1px;height:72px;background:#000;"></div>
<div class="a" style="left:317px;top:249px;width:1px;height:72px;background:#000;"></div>
<div class="a" style="left:461px;top:249px;width:1px;height:72px;background:#000;"></div>
<div class="a" style="left:605px;top:249px;width:1px;height:72px;background:#000;"></div>
<div class="a" style="left:749px;top:249px;width:1px;height:72px;background:#000;"></div>
<div class="a" style="left:101px;top:249px;width:1px;height:72px;background:repeating-linear-gradient(180deg,#000 0 1px,transparent 1px 2px);"></div>
<div class="a" style="left:245px;top:249px;width:1px;height:72px;background:repeating-linear-gradient(180deg,#000 0 1px,transparent 1px 2px);"></div>
<div class="a" style="left:389px;top:249px;width:1px;height:72px;background:repeating-linear-gradient(180deg,#000 0 1px,transparent 1px 2px);"></div>
<div class="a" style="left:533px;top:249px;width:1px;height:72px;background:repeating-linear-gradient(180deg,#000 0 1px,transparent 1px 2px);"></div>
<div class="a" style="left:677px;top:249px;width:1px;height:72px;background:repeating-linear-gradient(180deg,#000 0 1px,transparent 1px 2px);"></div>
<div class="a" style="left:677px;top:321px;width:1px;height:18px;background:repeating-linear-gradient(180deg,#000 0 1px,transparent 1px 2px);"></div>
<div class="cell r" style="left:174px;top:267px;width:71px;">0.2</div>
<div class="cell r" style="left:246px;top:267px;width:71px;">&minus;0.11</div>
<div class="cell r" style="left:318px;top:267px;width:71px;">&minus;0.93</div>
<div class="cell r" style="left:390px;top:267px;width:71px;">&minus;0.32</div>
<div class="cell r" style="left:462px;top:267px;width:71px;">&minus;0.0484</div>
<div class="cell r" style="left:534px;top:267px;width:71px;">0.2644</div>
<div class="cell r" style="left:678px;top:267px;width:71px;">0.19</div>
<div class="cell r" style="left:30px;top:285px;width:71px;">0.81</div>
<div class="cell r" style="left:102px;top:285px;width:71px;">0.37</div>
<div class="cell r" style="left:174px;top:285px;width:71px;">&minus;0.8</div>
<div class="cell r" style="left:246px;top:285px;width:71px;">&minus;0.92</div>
<div class="cell r" style="left:318px;top:285px;width:71px;">&minus;0.29</div>
<div class="cell r" style="left:390px;top:285px;width:71px;">0.86</div>
<div class="cell r" style="left:462px;top:285px;width:71px;">&minus;0.2644</div>
<div class="cell r" style="left:534px;top:285px;width:71px;">&minus;1.0228</div>
<div class="cell r" style="left:606px;top:285px;width:71px;">0.2</div>
<div class="cell r" style="left:678px;top:285px;width:71px;">0.94</div>
<div class="cell r" style="left:30px;top:303px;width:71px;">0.64</div>
<div class="cell r" style="left:102px;top:303px;width:71px;">0.51</div>
<div class="cell r" style="left:174px;top:303px;width:71px;">0.71</div>
<div class="cell r" style="left:246px;top:303px;width:71px;">0.59</div>
<div class="cell r" style="left:462px;top:303px;width:71px;">&minus;0.5299</div>
<div class="cell r" style="left:534px;top:303px;width:71px;">1.5025</div>
<div class="cell r" style="left:606px;top:303px;width:71px;">0.79</div>
<div class="cell r" style="left:678px;top:303px;width:71px;">&minus;0.13</div>
<div class="cell r" style="left:606px;top:321px;width:71px;">0.187723</div>
<div class="cell r" style="left:678px;top:321px;width:71px;">0</div>
<div class="a" style="left:604px;top:265px;width:146px;height:75px;border:2px solid #217346"></div>
<div class="a" style="left:746px;top:335px;width:6px;height:6px;background:#217346;border:1px solid #fff"></div>
<div class="a" style="left:28px;top:267px;width:2px;height:72px;background:#217346;"></div>
<div class="a" style="left:772px;top:212px;width:504px;height:388px;background:#f0f0f0;border:1px solid #707070;box-shadow:0 3px 16px 3px rgba(0,0,0,.28)"></div>
<div class="a" style="left:773px;top:213px;width:502px;height:30px;background:#fff;"></div>
<svg style="left:1246px;top:221px;" width="12" height="12" viewBox="0 0 12 12"><path d="M0.5 0.5L11.5 11.5 M11.5 0.5L0.5 11.5" stroke="#000" stroke-width="1.1"/></svg>
<div class="a" style="left:779px;top:258px;width:489px;height:153px;border:1px solid #dcdcdc"></div>
<div class="a" style="left:783px;top:252px;width:58px;height:12px;background:#f0f0f0;"></div>
<div class="a" style="left:828px;top:274px;width:198px;height:23px;background:#fff;border:1px solid #a8a8a8"></div>
<div class="a" style="left:1004px;top:274px;width:22px;height:23px;background:#e6e6e6;border:2px solid #b4b4b4"></div>
<div class="a" style="left:1007px;top:277px;width:16px;height:17px;background:#f4f4f4"></div>
<svg style="left:1010px;top:279px;" width="11" height="12" viewBox="0 0 11 12"><path d="M5.5 10V2 M1.8 5.5L5.5 1.8L9.2 5.5" fill="none" stroke="#000" stroke-width="1.6"/><path d="M1 11.5H10" stroke="#000" stroke-width="1.2"/></svg>
<div class="a" style="left:828px;top:301px;width:198px;height:23px;background:#fff;border:1px solid #a8a8a8"></div>
<div class="a" style="left:1004px;top:301px;width:22px;height:23px;background:#e6e6e6;border:2px solid #b4b4b4"></div>
<div class="a" style="left:1007px;top:304px;width:16px;height:17px;background:#f4f4f4"></div>
<svg style="left:1010px;top:306px;" width="11" height="12" viewBox="0 0 11 12"><path d="M5.5 10V2 M1.8 5.5L5.5 1.8L9.2 5.5" fill="none" stroke="#000" stroke-width="1.6"/><path d="M1 11.5H10" stroke="#000" stroke-width="1.2"/></svg>
<div class="a" style="left:828px;top:328px;width:198px;height:23px;background:#fff;border:1px solid #a8a8a8"></div>
<div class="a" style="left:1004px;top:328px;width:22px;height:23px;background:#e6e6e6;border:2px solid #b4b4b4"></div>
<div class="a" style="left:1007px;top:331px;width:16px;height:17px;background:#f4f4f4"></div>
<svg style="left:1010px;top:333px;" width="11" height="12" viewBox="0 0 11 12"><path d="M5.5 10V2 M1.8 5.5L5.5 1.8L9.2 5.5" fill="none" stroke="#000" stroke-width="1.6"/><path d="M1 11.5H10" stroke="#000" stroke-width="1.2"/></svg>
<div class="a" style="left:828px;top:355px;width:198px;height:23px;background:#fff;border:1px solid #a8a8a8"></div>
<div class="a" style="left:1004px;top:355px;width:22px;height:23px;background:#e6e6e6;border:2px solid #b4b4b4"></div>
<div class="a" style="left:1007px;top:358px;width:16px;height:17px;background:#f4f4f4"></div>
<svg style="left:1010px;top:360px;" width="11" height="12" viewBox="0 0 11 12"><path d="M5.5 10V2 M1.8 5.5L5.5 1.8L9.2 5.5" fill="none" stroke="#000" stroke-width="1.6"/><path d="M1 11.5H10" stroke="#000" stroke-width="1.2"/></svg>
<div class="a" style="left:828px;top:382px;width:198px;height:23px;background:#fff;border:1px solid #a8a8a8"></div>
<div class="a" style="left:1004px;top:382px;width:22px;height:23px;background:#e6e6e6;border:2px solid #b4b4b4"></div>
<div class="a" style="left:1007px;top:385px;width:16px;height:17px;background:#f4f4f4"></div>
<svg style="left:1010px;top:387px;" width="11" height="12" viewBox="0 0 11 12"><path d="M5.5 10V2 M1.8 5.5L5.5 1.8L9.2 5.5" fill="none" stroke="#000" stroke-width="1.6"/><path d="M1 11.5H10" stroke="#000" stroke-width="1.2"/></svg>
<div class="a" style="left:832px;top:277px;width:7px;height:15px;background:#cccccc;"></div>
<div class="a" style="left:1243px;top:274px;width:17px;height:131px;background:#f0f0f0;"></div>
<div class="a" style="left:1243px;top:274px;width:1px;height:131px;background:#ffffff;"></div>
<div class="a" style="left:1245px;top:291px;width:14px;height:81px;background:#cdcdcd;"></div>
<svg style="left:1248px;top:280px;" width="8" height="6" viewBox="0 0 8 6"><path d="M0.8 5L4 1.5L7.2 5" fill="none" stroke="#606060" stroke-width="1.6"/></svg>
<svg style="left:1248px;top:393px;" width="8" height="6" viewBox="0 0 8 6"><path d="M0.8 1L4 4.5L7.2 1" fill="none" stroke="#606060" stroke-width="1.6"/></svg>
<div class="a" style="left:779px;top:522px;width:490px;height:1px;background:#d8d8d8;"></div>
<div class="a" style="left:779px;top:583px;width:100px;height:1px;background:#0066cc;"></div>
<div class="a" style="left:1110px;top:566px;width:74px;height:24px;background:#e1e1e1;border:2px solid #0078d7"></div>
<div class="a" style="left:1194px;top:566px;width:74px;height:24px;background:#e1e1e1;border:1px solid #adadad"></div>
<div class="a" style="left:0px;top:0px;width:1px;height:645px;background:#8a8a8a;"></div>
<div class="tx" style="left:23.40px;top:10.49px;font-size:12.77px;line-height:12.77px;color:#a8ccb5;transform:scaleX(0.961);">自動保存</div>
<div class="tx" style="left:96.68px;top:11.37px;font-size:9.41px;line-height:9.41px;color:#fff;transform:scaleX(0.687);font-weight:bold;font-style:italic">オフ</div>
<div class="tx" style="left:602.61px;top:10.47px;font-size:12.77px;line-height:12.77px;color:#cde2d4;transform:scaleX(1.018);">XLPack_5_examples_D2c.xlsm  -  Excel</div>
<div class="tx" style="left:1186.14px;top:11.12px;font-size:12.50px;line-height:12.50px;color:#23603e;transform:scaleX(0.726);">サインイン</div>
<div class="tx" style="left:7.97px;top:43.98px;font-size:13.79px;line-height:13.79px;color:#444;transform:scaleX(0.679);">ファイル</div>
<div class="tx" style="left:69.39px;top:42.14px;font-size:14.29px;line-height:14.29px;color:#333;transform:scaleX(0.781);font-weight:bold">ホーム</div>
<div class="tx" style="left:127.37px;top:43.76px;font-size:12.24px;line-height:12.24px;color:#444;transform:scaleX(1.136);">挿入</div>
<div class="tx" style="left:181.87px;top:44.49px;font-size:12.63px;line-height:12.63px;color:#444;transform:scaleX(0.976);">描画</div>
<div class="tx" style="left:235.68px;top:42.36px;font-size:14.94px;line-height:14.94px;color:#444;transform:scaleX(0.716);">ページ レイアウト</div>
<div class="tx" style="left:350.87px;top:44.16px;font-size:11.46px;line-height:11.46px;color:#444;transform:scaleX(1.261);">数式</div>
<div class="tx" style="left:404.33px;top:42.78px;font-size:12.22px;line-height:12.22px;color:#444;transform:scaleX(0.939);">データ</div>
<div class="tx" style="left:464.00px;top:44.16px;font-size:11.46px;line-height:11.46px;color:#444;transform:scaleX(1.172);">校閲</div>
<div class="tx" style="left:515.60px;top:44.15px;font-size:11.58px;line-height:11.58px;color:#444;transform:scaleX(1.163);">表示</div>
<div class="tx" style="left:570.24px;top:43.91px;font-size:11.70px;line-height:11.70px;color:#444;transform:scaleX(1.085);">開発</div>
<div class="tx" style="left:622.40px;top:43.88px;font-size:12.50px;line-height:12.50px;color:#444;transform:scaleX(0.837);">ヘルプ</div>
<div class="tx" style="left:711.87px;top:44.27px;font-size:11.34px;line-height:11.34px;color:#444;transform:scaleX(1.142);">検索</div>
<div class="tx" style="left:1308.22px;top:43.86px;font-size:12.89px;line-height:12.89px;color:#a6a6a6;transform:scaleX(1.081);">共有</div>
<div class="tx" style="left:9.89px;top:106.67px;font-size:11.00px;line-height:11.00px;color:#b1b1b1;transform:scaleX(0.998);">貼り付け</div>
<div class="tx" style="left:10.55px;top:146.89px;font-size:11.22px;line-height:11.22px;color:#444;transform:scaleX(0.807);">クリップボード</div>
<div class="tx" style="left:111.09px;top:81.56px;font-size:12.96px;line-height:12.96px;color:#9a9a9a;transform:scaleX(0.941);">M S</div>
<div class="tx" style="left:140.09px;top:81.03px;font-size:11.70px;line-height:11.70px;color:#9a9a9a;transform:scaleX(0.822);">Pゴシック</div>
<div class="tx" style="left:266.60px;top:80.68px;font-size:14.49px;line-height:14.49px;color:#9a9a9a;transform:scaleX(0.851);">11</div>
<div class="tx" style="left:310.40px;top:78.68px;font-size:14.49px;line-height:14.49px;color:#a0a0a0;transform:scaleX(0.880);">A</div>
<div class="tx" style="left:332.15px;top:81.46px;font-size:12.75px;line-height:12.75px;color:#a0a0a0;transform:scaleX(0.825);">A</div>
<div class="tx" style="left:113.55px;top:110.68px;font-size:14.49px;line-height:14.49px;color:#909090;transform:scaleX(0.819);font-weight:bold">B</div>
<div class="tx" style="left:276.80px;top:108.32px;font-size:15.22px;line-height:15.22px;color:#a0a0a0;transform:scaleX(0.979);">A</div>
<div class="tx" style="left:320.47px;top:111.59px;font-size:8.03px;line-height:8.03px;color:#a6a6a6;transform:scaleX(0.982);">ア</div>
<div class="tx" style="left:201.02px;top:146.82px;font-size:12.94px;line-height:12.94px;color:#444;transform:scaleX(0.687);">フォント</div>
<div class="tx" style="left:512.89px;top:82.76px;font-size:11.88px;line-height:11.88px;color:#b1b1b1;transform:scaleX(0.894);">折り返して全体を表示する</div>
<div class="tx" style="left:513.86px;top:113.63px;font-size:12.24px;line-height:12.24px;color:#b1b1b1;transform:scaleX(0.889);">セルを結合して中央揃え</div>
<div class="tx" style="left:484.50px;top:146.99px;font-size:12.77px;line-height:12.77px;color:#444;transform:scaleX(0.979);">配置</div>
<div class="tx" style="left:668.88px;top:80.62px;font-size:12.63px;line-height:12.63px;color:#9a9a9a;transform:scaleX(0.935);">標準</div>
<div class="tx" style="left:702.31px;top:108.80px;font-size:20.00px;line-height:20.00px;color:#a0a0a0;transform:scaleX(0.922);">%</div>
<div class="tx" style="left:763.69px;top:110.39px;font-size:8.73px;line-height:8.73px;color:#a0a0a0;transform:scaleX(1.075);">.0</div>
<div class="tx" style="left:757.44px;top:119.19px;font-size:8.73px;line-height:8.73px;color:#a0a0a0;transform:scaleX(1.202);">.00</div>
<div class="tx" style="left:779.09px;top:110.39px;font-size:8.73px;line-height:8.73px;color:#a0a0a0;transform:scaleX(1.128);">.00</div>
<div class="tx" style="left:785.50px;top:119.19px;font-size:8.73px;line-height:8.73px;color:#a0a0a0;transform:scaleX(1.011);">.0</div>
<div class="tx" style="left:709.88px;top:146.36px;font-size:12.77px;line-height:12.77px;color:#444;transform:scaleX(0.964);">数値</div>
<div class="tx" style="left:814.14px;top:108.49px;font-size:10.20px;line-height:10.20px;color:#b1b1b1;transform:scaleX(1.201);">条件付き</div>
<div class="tx" style="left:819.79px;top:121.65px;font-size:11.70px;line-height:11.70px;color:#b1b1b1;transform:scaleX(0.881);">書式</div>
<div class="tx" style="left:863.85px;top:108.40px;font-size:10.20px;line-height:10.20px;color:#b1b1b1;transform:scaleX(0.953);">テーブルとして</div>
<div class="tx" style="left:868.75px;top:122.50px;font-size:11.11px;line-height:11.11px;color:#b1b1b1;transform:scaleX(1.128);">書式設定</div>
<div class="tx" style="left:941.39px;top:106.95px;font-size:12.82px;line-height:12.82px;color:#b1b1b1;transform:scaleX(0.796);">セルの</div>
<div class="tx" style="left:933.28px;top:121.28px;font-size:12.22px;line-height:12.22px;color:#b1b1b1;transform:scaleX(0.783);">スタイル</div>
<div class="tx" style="left:878.28px;top:144.17px;font-size:13.33px;line-height:13.33px;color:#444;transform:scaleX(0.720);">スタイル</div>
<div class="tx" style="left:1005.88px;top:107.28px;font-size:11.22px;line-height:11.22px;color:#b1b1b1;transform:scaleX(1.196);">挿入</div>
<div class="tx" style="left:1047.75px;top:107.16px;font-size:11.46px;line-height:11.46px;color:#b1b1b1;transform:scaleX(1.178);">削除</div>
<div class="tx" style="left:1089.75px;top:106.65px;font-size:11.70px;line-height:11.70px;color:#b1b1b1;transform:scaleX(1.057);">書式</div>
<div class="tx" style="left:1048.89px;top:142.54px;font-size:15.38px;line-height:15.38px;color:#444;transform:scaleX(0.735);">セル</div>
<div class="tx" style="left:1160.71px;top:73.97px;font-size:11.41px;line-height:11.41px;color:#333;transform:scaleX(0.957);">オート SUM</div>
<div class="tx" style="left:1161.31px;top:96.69px;font-size:12.82px;line-height:12.82px;color:#b1b1b1;transform:scaleX(0.675);">フィル</div>
<div class="tx" style="left:1161.42px;top:118.86px;font-size:11.61px;line-height:11.61px;color:#333;transform:scaleX(0.720);">クリア</div>
<div class="tx" style="left:1242.84px;top:107.69px;font-size:10.31px;line-height:10.31px;color:#b1b1b1;transform:scaleX(1.079);">並べ替えと</div>
<div class="tx" style="left:1242.16px;top:121.65px;font-size:11.00px;line-height:11.00px;color:#b1b1b1;transform:scaleX(0.779);">フィルター</div>
<div class="tx" style="left:1302.57px;top:107.27px;font-size:11.34px;line-height:11.34px;color:#b1b1b1;transform:scaleX(1.162);">検索</div>
<div class="tx" style="left:1301.81px;top:122.04px;font-size:11.58px;line-height:11.58px;color:#b1b1b1;transform:scaleX(1.094);">選択</div>
<div class="tx" style="left:1228.00px;top:146.12px;font-size:12.77px;line-height:12.77px;color:#444;transform:scaleX(0.919);">編集</div>
<div class="tx" style="left:12.67px;top:182.99px;font-size:15.71px;line-height:15.71px;color:#444;transform:scaleX(1.054);">MMULT</div>
<div class="tx" style="left:223.60px;top:178.76px;font-size:13.41px;line-height:13.41px;color:#3a9a5e;transform:scaleX(1.285);font-style:italic;font-weight:bold;font-family:'Liberation Serif'">f</div>
<div class="tx" style="left:227.40px;top:181.85px;font-size:11.09px;line-height:11.09px;color:#3a9a5e;transform:scaleX(1.387);font-style:italic;font-weight:bold;font-family:'Liberation Serif'">x</div>
<div class="tx" style="left:263.37px;top:179.09px;font-size:15.96px;line-height:15.96px;color:#333;transform:scaleX(0.982);font-weight:bold">=WZgbsv2(3,1,1,A3:F5,G3:H5)</div>
<div class="tx" style="left:31.57px;top:235.64px;font-size:12.13px;line-height:12.13px;color:#000;transform:scaleX(1.043);">WZgbsv2</div>
<div class="tx" style="left:31.60px;top:252.77px;font-size:13.33px;line-height:13.33px;color:#000;transform:scaleX(1.004);">A</div>
<div class="tx" style="left:463.14px;top:251.88px;font-size:14.49px;line-height:14.49px;color:#000;transform:scaleX(1.058);">B</div>
<div class="tx" style="left:606.85px;top:251.88px;font-size:14.49px;line-height:14.49px;color:#000;transform:scaleX(1.087);">X</div>
<div class="tx" style="left:607.70px;top:268.82px;font-size:15.18px;line-height:15.18px;color:#000;transform:scaleX(0.859);">F5,G3:H5</div>
<div class="tx" style="left:666.62px;top:269.84px;font-size:13.83px;line-height:13.83px;color:#000;transform:scaleX(0.994);">)</div>
<div class="tx" style="left:781.55px;top:221.41px;font-size:11.70px;line-height:11.70px;color:#000;transform:scaleX(0.933);">関数の引数</div>
<div class="tx" style="left:1203.40px;top:219.86px;font-size:14.29px;line-height:14.29px;color:#000;transform:scaleX(0.840);font-weight:bold">?</div>
<div class="tx" style="left:785.88px;top:252.72px;font-size:10.64px;line-height:10.64px;color:#000;transform:scaleX(1.175);">WZgbsv2</div>
<div class="tx" style="left:809.62px;top:278.91px;font-size:13.04px;line-height:13.04px;color:#000;transform:scaleX(1.055);">N</div>
<div class="tx" style="left:831.17px;top:280.10px;font-size:12.68px;line-height:12.68px;color:#000;transform:scaleX(1.111);">3</div>
<div class="tx" style="left:1035.18px;top:280.32px;font-size:13.00px;line-height:13.00px;color:#000;transform:scaleX(1.256);">=</div>
<div class="tx" style="left:1053.49px;top:280.10px;font-size:12.68px;line-height:12.68px;color:#000;transform:scaleX(1.007);">3</div>
<div class="tx" style="left:807.60px;top:306.52px;font-size:12.33px;line-height:12.33px;color:#000;transform:scaleX(1.057);">Kl</div>
<div class="tx" style="left:831.89px;top:305.91px;font-size:13.04px;line-height:13.04px;color:#000;transform:scaleX(0.917);">1</div>
<div class="tx" style="left:1035.18px;top:307.32px;font-size:13.00px;line-height:13.00px;color:#000;transform:scaleX(1.256);">=</div>
<div class="tx" style="left:1053.88px;top:305.91px;font-size:13.04px;line-height:13.04px;color:#000;transform:scaleX(1.070);">1</div>
<div class="tx" style="left:802.72px;top:333.94px;font-size:12.86px;line-height:12.86px;color:#000;transform:scaleX(1.067);">Ku</div>
<div class="tx" style="left:831.89px;top:332.91px;font-size:13.04px;line-height:13.04px;color:#000;transform:scaleX(0.917);">1</div>
<div class="tx" style="left:1035.18px;top:334.32px;font-size:13.00px;line-height:13.00px;color:#000;transform:scaleX(1.256);">=</div>
<div class="tx" style="left:1053.88px;top:332.91px;font-size:13.04px;line-height:13.04px;color:#000;transform:scaleX(1.070);">1</div>
<div class="tx" style="left:803.80px;top:360.54px;font-size:12.16px;line-height:12.16px;color:#000;transform:scaleX(1.033);">Ab</div>
<div class="tx" style="left:832.40px;top:361.10px;font-size:12.68px;line-height:12.68px;color:#000;transform:scaleX(1.014);">A3:F5</div>
<div class="tx" style="left:1035.18px;top:361.32px;font-size:13.00px;line-height:13.00px;color:#000;transform:scaleX(1.256);">=</div>
<div class="tx" style="left:1054.63px;top:361.57px;font-size:11.91px;line-height:11.91px;color:#000;transform:scaleX(1.148);">{0,0,0.2,-0.11,-0.93,-0.32;0....</div>
<div class="tx" style="left:809.92px;top:386.91px;font-size:13.04px;line-height:13.04px;color:#000;transform:scaleX(1.073);">B</div>
<div class="tx" style="left:830.75px;top:388.10px;font-size:12.68px;line-height:12.68px;color:#000;transform:scaleX(1.037);">G3:H5</div>
<div class="tx" style="left:1035.18px;top:388.32px;font-size:13.00px;line-height:13.00px;color:#000;transform:scaleX(1.256);">=</div>
<div class="tx" style="left:1054.48px;top:388.57px;font-size:11.91px;line-height:11.91px;color:#000;transform:scaleX(1.129);">{-0.0484,0.2644;-0.2644,-1....</div>
<div class="tx" style="left:1035.18px;top:418.82px;font-size:13.00px;line-height:13.00px;color:#000;transform:scaleX(1.256);">=</div>
<div class="tx" style="left:1054.48px;top:419.03px;font-size:11.81px;line-height:11.81px;color:#000;transform:scaleX(1.152);">{-0.15,0.19;0.2,0.94;0.79,-0....</div>
<div class="tx" style="left:777.63px;top:437.00px;font-size:13.21px;line-height:13.21px;color:#000;transform:scaleX(0.946);">連立一次方程式 AX = B の解 (一般複素帯行列) (実数部／虚数部分離形式)</div>
<div class="tx" style="left:967.04px;top:466.36px;font-size:12.87px;line-height:12.87px;color:#000;transform:scaleX(0.933);">N  ：Aの行および列数 (>= 1)</div>
<div class="tx" style="left:777.88px;top:538.12px;font-size:12.50px;line-height:12.50px;color:#000;transform:scaleX(0.984);">数式の結果 =   -0.15</div>
<div class="tx" style="left:777.82px;top:571.39px;font-size:11.43px;line-height:11.43px;color:#0066cc;transform:scaleX(0.976);">この関数のヘルプ(H)</div>
<div class="tx" style="left:1137.88px;top:570.89px;font-size:14.08px;line-height:14.08px;color:#000;transform:scaleX(0.878);">OK</div>
<div class="tx" style="left:1205.10px;top:570.19px;font-size:15.12px;line-height:15.12px;color:#000;transform:scaleX(0.676);">キャンセル</div>
</body></html>
